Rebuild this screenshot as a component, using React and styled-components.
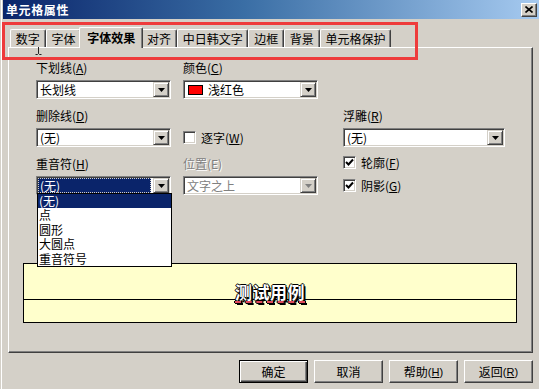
import React from "react";
import styled, { createGlobalStyle } from "styled-components";

const tabs = ["数字", "字体", "字体效果", "对齐", "中日韩文字", "边框", "背景", "单元格保护"];
const accents = ["(无)", "点", "圆形", "大圆点", "重音符号"];
const buttons = [
	{ label: "确定", primary: true },
	{ label: "取消" },
	{ label: "帮助", key: "H" },
	{ label: "返回", key: "R" },
];

const GlobalStyle = createGlobalStyle`
	html, body {
		margin: 0;
		padding: 0;
		background: #d4d0c8;
	}
	body {
		font-family: "Liberation Sans", "Noto Sans CJK SC", sans-serif;
		font-size: 12px;
		color: #000;
	}
`;

function Arrow({ disabled }) {
	return (
		<svg width="7" height="4" viewBox="0 0 7 4">
			<path d="M0 0h7L3.5 4z" fill={disabled ? "#808080" : "#000"} />
		</svg>
	);
}

function Select({ value, swatch, focused, disabled }) {
	return (
		<Combo>
			<ComboText $focused={focused} $disabled={disabled}>
				{swatch && <Swatch style={{ background: swatch }} />}
				<span>{value}</span>
			</ComboText>
			<ArrowBtn>
				<Arrow disabled={disabled} />
			</ArrowBtn>
		</Combo>
	);
}

function Check({ checked, label, hot }) {
	return (
		<CheckRow>
			<Box>
				{checked && (
					<svg width="9" height="9" viewBox="0 0 9 9">
						<path d="M1 4l2.5 2.5L8 1.5" stroke="#000" strokeWidth="2" fill="none" />
					</svg>
				)}
			</Box>
			<span>
				{label}(<u>{hot}</u>)
			</span>
		</CheckRow>
	);
}

export default function App() {
	return (
		<>
			<GlobalStyle />
			<Window>
				<TitleBar>
					<Title>单元格属性</Title>
					<CloseBtn>
						<svg width="8" height="7" viewBox="0 0 8 7">
							<path d="M0.5 0.5l7 6M7.5 0.5l-7 6" stroke="#000" strokeWidth="1.6" />
						</svg>
					</CloseBtn>
				</TitleBar>

				<Body>
					<TabStrip>
						{tabs.map((t, i) => (
							<Tab key={t} $active={i === 2}>{t}</Tab>
						))}
					</TabStrip>

					<Panel>
						<Fields>
							<Column $width={135}>
								<Group>
									<Label>下划线(<u>A</u>)</Label>
									<Select value="长划线" />
								</Group>
								<Group>
									<Label>删除线(<u>D</u>)</Label>
									<Select value="(无)" />
								</Group>
								<Group>
									<Label>重音符(<u>H</u>)</Label>
									<Select value="(无)" focused />
								</Group>
							</Column>

							<Column $width={135}>
								<Group>
									<Label>颜色(<u>C</u>)</Label>
									<Select value="浅红色" swatch="#ff0000" />
								</Group>
								<Group>
									<Label />
									<CheckSlot>
										<Check label="逐字" hot="W" />
									</CheckSlot>
								</Group>
								<Group>
									<Label $disabled>位置(E)</Label>
									<Select value="文字之上" disabled />
								</Group>
							</Column>

							<Column $width={162} $offset={48}>
								<Group>
									<Label>浮雕(<u>R</u>)</Label>
									<Select value="(无)" />
								</Group>
								<Checks>
									<Check checked label="轮廓" hot="F" />
									<Check checked label="阴影" hot="G" />
								</Checks>
							</Column>
						</Fields>

						<Preview>
							<Sample>测试用例</Sample>
						</Preview>

						<DropList>
							{accents.map((a, i) => (
								<DropItem key={a} $selected={i === 0}>{a}</DropItem>
							))}
						</DropList>
					</Panel>

					<ButtonRow>
						{buttons.map(b => (
							<Button key={b.label} $primary={b.primary}>
								{b.label}
								{b.key && <Hot>(<u>{b.key}</u>)</Hot>}
							</Button>
						))}
					</ButtonRow>
				</Body>

				<Marker />
				<Cursor>
					<svg width="7" height="15" viewBox="0 0 7 15">
						<path d="M0.5 0.5h2l1 1 1-1h2M3.5 1.5v12M0.5 14.5h2l1-1 1 1h2" stroke="#222" strokeWidth="1" fill="none" />
					</svg>
				</Cursor>
			</Window>
		</>
	);
}

const Window = styled.div`
	position: relative;
	width: 539px;
	height: 389px;
	overflow: hidden;
	background: #d4d0c8;
	box-shadow: inset 1px 0 #d4d0c8, inset 2px 0 #fff;
`;

const TitleBar = styled.div`
	display: flex;
	align-items: center;
	justify-content: space-between;
	height: 19px;
	margin-left: 3px;
	padding: 0 2px 0 3px;
	background: linear-gradient(to right, #0a246a, #3a6ea5 45%, #a6caf0);
`;

const Title = styled.span`
	color: #fff;
	font-family: "Noto Sans CJK SC", sans-serif;
	font-weight: 700;
	font-size: 12px;
	letter-spacing: 0.6px;
`;

const CloseBtn = styled.div`
	display: flex;
	align-items: center;
	justify-content: center;
	width: 16px;
	height: 14px;
	box-sizing: border-box;
	background: #d4d0c8;
	border: 1px solid;
	border-color: #fff #404040 #404040 #fff;
	box-shadow: inset -1px -1px #808080;
`;

const Body = styled.div`
	padding: 8px 6px 0 8px;
`;

const TabStrip = styled.div`
	position: relative;
	z-index: 1;
	display: flex;
	align-items: flex-end;
	height: 20px;
	padding-left: 2px;
`;

const Tab = styled.div`
	display: flex;
	align-items: center;
	height: ${p => (p.$active ? 21 : 18)}px;
	margin: 0 ${p => (p.$active ? -2 : 0)}px ${p => (p.$active ? -1 : 0)}px;
	padding: 0 ${p => (p.$active ? 7 : 4.8)}px ${p => (p.$active ? 1 : 0)}px;
	box-sizing: border-box;
	position: relative;
	z-index: ${p => (p.$active ? 2 : 0)};
	background: #d4d0c8;
	border: 1px solid;
	border-bottom: none;
	border-color: #fff #404040 #fff #fff;
	border-radius: 2px 2px 0 0;
	box-shadow: inset -1px 0 #808080;
	font-family: "Noto Sans CJK SC", sans-serif;
	font-size: 12px;
	font-weight: ${p => (p.$active ? 700 : 400)};
	white-space: nowrap;
`;

const Panel = styled.div`
	position: relative;
	height: 306px;
	box-sizing: border-box;
	border: 1px solid;
	border-color: #fff #404040 #404040 #fff;
	box-shadow: inset -1px -1px #808080;
	padding: 13px 0 0 27px;
`;

const Fields = styled.div`
	display: flex;
	gap: 12px;
`;

const Column = styled.div`
	display: flex;
	flex-direction: column;
	gap: 10px;
	width: ${p => p.$width}px;
	margin-top: ${p => p.$offset || 0}px;
	&:last-child {
		margin-left: 13px;
	}
`;

const Group = styled.div`
	display: flex;
	flex-direction: column;
	gap: 5px;
`;

const Label = styled.div`
	height: 14px;
	line-height: 14px;
	font-family: "Noto Sans CJK SC", sans-serif;
	font-size: 12px;
	white-space: nowrap;
	color: ${p => (p.$disabled ? "#808080" : "#000")};
	text-shadow: ${p => (p.$disabled ? "1px 1px #fff" : "none")};
`;

const Combo = styled.div`
	display: flex;
	height: 19px;
	box-sizing: border-box;
	background: #fff;
	border: 1px solid;
	border-color: #808080 #fff #fff #808080;
	box-shadow: inset 1px 1px #404040, inset -1px -1px #d4d0c8;
	padding: 1px;
`;

const ComboText = styled.div`
	flex: 1;
	display: flex;
	align-items: center;
	gap: 5px;
	padding-left: 2px;
	margin-right: ${p => (p.$focused ? 2 : 0)}px;
	font-family: "Noto Sans CJK SC", sans-serif;
	font-size: 12px;
	line-height: 15px;
	white-space: nowrap;
	color: ${p => (p.$focused ? "#fff" : p.$disabled ? "#808080" : "#000")};
	background: ${p => (p.$focused ? "#0a246a" : "transparent")};
	outline: ${p => (p.$focused ? "1px dotted #d4d0c8" : "none")};
	outline-offset: -1px;
`;

const Swatch = styled.span`
	width: 15px;
	height: 10px;
	margin-left: 1px;
	border: 1px solid #000;
	box-sizing: border-box;
`;

const ArrowBtn = styled.div`
	display: flex;
	align-items: center;
	justify-content: center;
	width: 16px;
	height: 15px;
	box-sizing: border-box;
	background: #d4d0c8;
	border: 1px solid;
	border-color: #d4d0c8 #404040 #404040 #d4d0c8;
	box-shadow: inset 1px 1px #fff, inset -1px -1px #808080;
`;

const CheckSlot = styled.div`
	display: flex;
	align-items: center;
	height: 19px;
`;

const Checks = styled.div`
	display: flex;
	flex-direction: column;
	gap: 10px;
	margin-top: -1px;
`;

const CheckRow = styled.label`
	display: flex;
	align-items: center;
	gap: 5px;
	height: 13px;
	font-family: "Noto Sans CJK SC", sans-serif;
	font-size: 12px;
	white-space: nowrap;
`;

const Box = styled.span`
	display: flex;
	align-items: center;
	justify-content: center;
	width: 13px;
	height: 13px;
	box-sizing: border-box;
	background: #fff;
	border: 1px solid;
	border-color: #808080 #fff #fff #808080;
	box-shadow: inset 1px 1px #404040, inset -1px -1px #d4d0c8;
`;

const Preview = styled.div`
	display: flex;
	justify-content: center;
	height: 60px;
	box-sizing: border-box;
	margin: 68px 15px 0 -13px;
	padding-top: 19px;
	border: 1px solid #000;
	background: linear-gradient(#000, #000) 0 35px / 100% 1px no-repeat, #ffffcc;
`;

const Sample = styled.span`
	font-family: "Noto Sans CJK SC", sans-serif;
	font-size: 17px;
	font-weight: 700;
	line-height: 18px;
	letter-spacing: 0.5px;
	color: #fff;
	text-shadow: -1px 0 #000, 1px 0 #000, 0 -1px #000, 0 1px #000, 2px 2px #000;
	text-decoration: underline dashed #e04a5a;
	text-decoration-thickness: 2px;
	text-underline-offset: 2px;
`;

const DropList = styled.div`
	position: absolute;
	left: 28px;
	top: 145px;
	width: 135px;
	height: 74px;
	box-sizing: border-box;
	background: #fff;
	border: 1px solid #000;
`;

const DropItem = styled.div`
	height: 14.4px;
	line-height: 14.4px;
	padding-left: 1px;
	font-family: "Noto Sans CJK SC", sans-serif;
	font-size: 12px;
	color: ${p => (p.$selected ? "#fff" : "#000")};
	background: ${p => (p.$selected ? "#0a246a" : "transparent")};
`;

const ButtonRow = styled.div`
	display: flex;
	justify-content: flex-end;
	gap: 6px;
	margin-top: 7px;
`;

const Button = styled.div`
	display: flex;
	align-items: center;
	justify-content: center;
	width: 69px;
	height: 23px;
	box-sizing: border-box;
	background: #d4d0c8;
	border: 1px solid;
	border-color: ${p => (p.$primary ? "#000" : "#fff #404040 #404040 #fff")};
	box-shadow: ${p =>
		p.$primary
			? "inset 1px 1px #fff, inset -1px -1px #404040, inset -2px -2px #808080"
			: "inset -1px -1px #808080"};
	font-family: "Noto Sans CJK SC", sans-serif;
	font-size: 12px;
`;

const Hot = styled.span`
	font-family: "Liberation Sans", sans-serif;
	font-size: 11px;
`;

const Marker = styled.div`
	position: absolute;
	left: 2px;
	top: 22px;
	width: 416px;
	height: 38px;
	box-sizing: border-box;
	border: 3px solid #ee3b3b;
	pointer-events: none;
`;

const Cursor = styled.div`
	position: absolute;
	left: 35px;
	top: 40px;
	width: 7px;
	height: 15px;
	pointer-events: none;
`;
